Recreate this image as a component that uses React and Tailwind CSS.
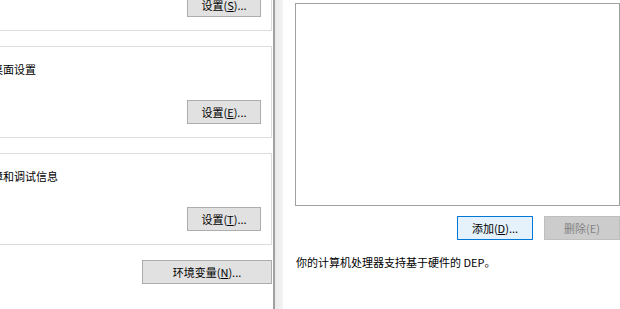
import React from "react";

const font = "font-['Noto_Sans_CJK_SC','Noto_Sans',sans-serif]";

function Btn({ children, w = "w-[74px]", variant = "normal", className = "" }) {
  const styles = {
    normal: "bg-[#e1e1e1] border-[#adadad] text-black",
    focus: "bg-[#e5f1fb] border-[#0078d7] text-black",
    disabled: "bg-[#cccccc] border-[#bfbfbf] text-[#838383]",
  };
  return (
    <div
      className={`${w} h-[24px] shrink-0 border box-border flex items-center justify-center text-[11px] leading-[15px] ${styles[variant]} ${className}`}
    >
      {children}
    </div>
  );
}

function Group({ text, children, top = true }) {
  return (
    <div
      className={`h-[92px] box-border border-r ${top ? "border-t" : ""} border-b border-[#dcdcdc] flex flex-col pt-[15px]`}
    >
      <div className="ml-[-96px] text-[11px] leading-[15px] whitespace-nowrap text-black">
        {text}
      </div>
      <div className="mt-[23px] self-end mr-[10px]">{children}</div>
    </div>
  );
}

export default function App() {
  return (
    <div className={`w-[620px] h-[309px] overflow-hidden bg-white flex ${font}`}>
      {/* Left window */}
      <div className="w-[272px] shrink-0 h-full overflow-hidden">
        <div className="flex flex-col mt-[-20px]">
          <div className="h-[51px] box-border border-r border-b border-[#dcdcdc] flex flex-col pt-[13px]">
            <div className="self-end mr-[10px]">
              <Btn>
                设置(<span className="underline">S</span>)...
              </Btn>
            </div>
          </div>
          <div className="mt-[15px]">
            <Group text="与登录帐户相关的桌面设置">
              <Btn>
                设置(<span className="underline">E</span>)...
              </Btn>
            </Group>
          </div>
          <div className="mt-[15px]">
            <Group text="系统启动、系统故障和调试信息">
              <Btn>
                设置(<span className="underline">T</span>)...
              </Btn>
            </Group>
          </div>
          <div className="mt-[15px] self-end">
            <Btn w="w-[130px]">
              环境变量(<span className="underline">N</span>)...
            </Btn>
          </div>
        </div>
      </div>

      {/* Window edge */}
      <div className="w-[1px] shrink-0 h-full bg-white" />
      <div className="w-[2px] shrink-0 h-full bg-[#a0a0a0]" />
      <div className="w-[8px] shrink-0 h-full bg-gradient-to-r from-[#e9e9e9] to-[#f4f4f4]" />

      {/* Right window */}
      <div className="flex-1 h-full flex flex-col pt-[3px] pl-[12px]">
        <div className="w-[325px] h-[203px] shrink-0 box-border border border-[#a0a0a0] bg-white" />
        <div className="w-[325px] mt-[10px] flex justify-end gap-[11px]">
          <Btn w="w-[76px]" variant="focus">
            添加(<span className="underline">D</span>)...
          </Btn>
          <Btn w="w-[76px]" variant="disabled">
            删除(E)
          </Btn>
        </div>
        <div className="mt-[15px] ml-[1px] text-[11px] leading-[15px] whitespace-nowrap text-black">
          你的计算机处理器支持基于硬件的 DEP。
        </div>
      </div>
    </div>
  );
}
